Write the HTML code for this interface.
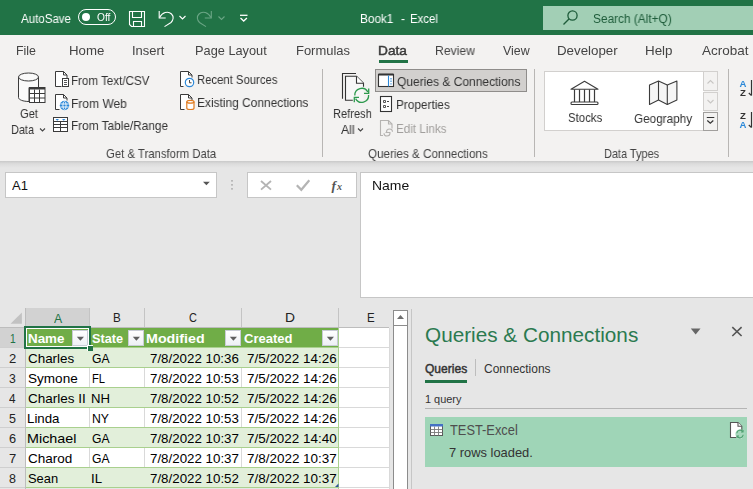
<!DOCTYPE html>
<html><head><meta charset="utf-8">
<style>
*{margin:0;padding:0;box-sizing:border-box}
html,body{width:753px;height:489px;overflow:hidden;background:#e6e6e6;font-family:"Liberation Sans",sans-serif;position:relative}
.a{position:absolute;white-space:nowrap}
svg.a{overflow:visible}
.g{will-change:transform}
</style></head><body>
<div class="a" style="left:0px;top:0px;width:753px;height:35px;background:#217346"></div>
<div class="a g" style="left:21.00px;top:11.54px;font-size:12px;line-height:14.4px;color:#fff;font-weight:normal;transform:scaleX(0.9612);transform-origin:0 0;">AutoSave</div>
<div class="a" style="left:78px;top:9px;width:38px;height:16px;border:1px solid #fff;border-radius:8px"></div>
<div class="a" style="left:82px;top:13px;width:8px;height:8px;background:#fff;border-radius:50%"></div>
<div class="a g" style="left:96.59px;top:12.04px;font-size:10px;line-height:12.0px;color:#fff;font-weight:normal;transform:scaleX(1.0175);transform-origin:0 0;">Off</div>
<svg class="a" style="left:0;top:0" width="260" height="35">
 <g fill="none" stroke="#fff" stroke-width="1.1">
  <path d="M129.5 11.5h15v15h-13l-2-2z"/>
  <path d="M132.5 11.5v6h9v-6"/>
  <path d="M133.5 26.5v-5h8v5"/>
  <path d="M159.2 11v7h6.5"/>
  <path d="M159.6 17.6C162 12.5 168 10.5 171.5 14C174 16.5 173.5 20 171 22.5L164.5 26.6"/>
  <path d="M179.5 16l3 3l3-3"/>
 </g>
 <g fill="none" stroke="#6aa585" stroke-width="1.1">
  <path d="M211.3 11v7h-6.5"/>
  <path d="M210.9 17.6C208.5 12.5 202.5 10.5 199 14C196.5 16.5 197 20 199.5 22.5L206 26.6"/>
  <path d="M218.5 16.5l3 3l3-3"/>
 </g>
 <g fill="none" stroke="#fff" stroke-width="1.3">
  <path d="M240 15.3h7.5"/>
  <path d="M240.5 18l3.2 3l3.2-3"/>
 </g>
</svg>
<div class="a g" style="left:360.36px;top:12.24px;font-size:12px;line-height:14.4px;color:#fff;font-weight:normal;transform:scaleX(0.9812);transform-origin:0 0;">Book1</div>
<div class="a g" style="left:400.52px;top:12.24px;font-size:12px;line-height:14.4px;color:#fff;font-weight:normal;">-</div>
<div class="a g" style="left:410.49px;top:12.24px;font-size:12px;line-height:14.4px;color:#fff;font-weight:normal;transform:scaleX(0.9480);transform-origin:0 0;">Excel</div>
<div class="a" style="left:543px;top:6px;width:210px;height:24px;background:#a2cfb5"></div>
<svg class="a" style="left:560px;top:8px" width="22" height="20"><g fill="none" stroke="#1e5c3a" stroke-width="1.3"><circle cx="12.5" cy="7.5" r="4.6"/><path d="M9.2 10.8L3.5 16.5"/></g></svg>
<div class="a g" style="left:592.53px;top:11.74px;font-size:12px;line-height:14.4px;color:#1e5c3a;font-weight:normal;transform:scaleX(0.9888);transform-origin:0 0;">Search (Alt+Q)</div>
<div class="a" style="left:0px;top:35px;width:753px;height:126px;background:#f3f2f1"></div>
<div class="a g" style="left:16.32px;top:44.06px;font-size:12.4px;line-height:14.88px;color:#444;font-weight:normal;transform:scaleX(0.9870);transform-origin:0 0;">File</div>
<div class="a g" style="left:68.54px;top:44.06px;font-size:12.4px;line-height:14.88px;color:#444;font-weight:normal;transform:scaleX(1.0684);transform-origin:0 0;">Home</div>
<div class="a g" style="left:132.03px;top:44.06px;font-size:12.4px;line-height:14.88px;color:#444;font-weight:normal;transform:scaleX(1.0460);transform-origin:0 0;">Insert</div>
<div class="a g" style="left:194.98px;top:44.06px;font-size:12.4px;line-height:14.88px;color:#444;font-weight:normal;transform:scaleX(1.0310);transform-origin:0 0;">Page Layout</div>
<div class="a g" style="left:296.16px;top:44.06px;font-size:12.4px;line-height:14.88px;color:#444;font-weight:normal;transform:scaleX(1.0455);transform-origin:0 0;">Formulas</div>
<div class="a g" style="left:434.52px;top:44.06px;font-size:12.4px;line-height:14.88px;color:#444;font-weight:normal;transform:scaleX(0.9833);transform-origin:0 0;">Review</div>
<div class="a g" style="left:503.30px;top:44.06px;font-size:12.4px;line-height:14.88px;color:#444;font-weight:normal;">View</div>
<div class="a g" style="left:556.93px;top:44.06px;font-size:12.4px;line-height:14.88px;color:#444;font-weight:normal;transform:scaleX(1.0746);transform-origin:0 0;">Developer</div>
<div class="a g" style="left:644.93px;top:44.06px;font-size:12.4px;line-height:14.88px;color:#444;font-weight:normal;transform:scaleX(1.0805);transform-origin:0 0;">Help</div>
<div class="a g" style="left:702.00px;top:44.06px;font-size:12.4px;line-height:14.88px;color:#444;font-weight:normal;transform:scaleX(1.0874);transform-origin:0 0;">Acrobat</div>
<div class="a g" style="left:377.90px;top:44.06px;font-size:12.4px;line-height:14.88px;color:#3a3a3a;font-weight:normal;transform:scaleX(1.1050);transform-origin:0 0;-webkit-text-stroke:0.45px #3a3a3a;">Data</div>
<div class="a" style="left:379px;top:60px;width:29px;height:3px;background:#217346"></div>
<svg class="a" style="left:0;top:60px" width="60" height="50"><g transform="translate(0,-60)">
 <path d="M18.5 77v20.5c0 2.2 4.5 4 10.5 4V87.5h9.5V77" fill="#fafafa" stroke="#3b3b3b" stroke-width="1"/>
 <ellipse cx="28.5" cy="77" rx="10" ry="4" fill="#fafafa" stroke="#3b3b3b" stroke-width="1"/>
 <rect x="29.5" y="87.5" width="15.5" height="15" fill="#fff" stroke="#3b3b3b" stroke-width="1"/>
 <rect x="29.5" y="87.5" width="15.5" height="2" fill="#3b3b3b"/>
 <path d="M29.5 93.5h15.5M29.5 98h15.5M34.5 89.5v13M39.5 89.5v13" stroke="#3b3b3b" stroke-width="1"/>
</g></svg>
<div class="a g" style="left:19.94px;top:106.18px;font-size:12.8px;line-height:15.36px;color:#333;font-weight:normal;transform:scaleX(0.8692);transform-origin:0 0;">Get</div>
<div class="a g" style="left:10.93px;top:122.08px;font-size:12.8px;line-height:15.36px;color:#333;font-weight:normal;transform:scaleX(0.8518);transform-origin:0 0;">Data</div>
<svg class="a" style="left:39px;top:127px" width="8" height="6"><path d="M1 1.5l2.5 2.5l2.5-2.5" fill="none" stroke="#444" stroke-width="1.1"/></svg>
<svg class="a" style="left:50px;top:66px" width="150" height="70"><g transform="translate(-50,-66)" stroke-width="1" shape-rendering="auto">
 <!-- From Text/CSV -->
 <path d="M61.5 86.5h-6v-15h8l3.5 3.5v3.5" fill="#fff" stroke="#3b3b3b"/>
 <path d="M63.5 71.5v3.5h3.5" fill="none" stroke="#3b3b3b"/>
 <rect x="62.5" y="78.5" width="6" height="8" fill="#fff" stroke="#3b3b3b"/>
 <path d="M64 80.5h3M64 82.5h3M64 84.5h3" stroke="#555" stroke-width="1"/>
 <!-- From Web -->
 <path d="M59.5 109.5h-4v-15h8l3.5 3.5v2.5" fill="#fff" stroke="#3b3b3b"/>
 <path d="M63.5 94.5v3.5h3.5" fill="none" stroke="#3b3b3b"/>
 <circle cx="64.5" cy="105.5" r="4.7" fill="#2b88d8"/>
 <path d="M60.3 104h8.4M60.3 107h8.4" stroke="#fff" stroke-width="0.9"/>
 <ellipse cx="64.5" cy="105.5" rx="1.6" ry="4.2" fill="none" stroke="#fff" stroke-width="0.9"/>
 <!-- From Table/Range -->
 <rect x="53.5" y="117.5" width="14" height="14" fill="#fff" stroke="#3b3b3b"/>
 <path d="M53.5 121.5h14M53.5 124.5h14M53.5 127.5h14M60.5 121.5v10" stroke="#3b3b3b" stroke-width="1"/>
 <path d="M55.5 119h3.5l-1.75 1.8zM62 119h3.5l-1.75 1.8z" fill="#2b88d8"/>
 <!-- Recent Sources -->
 <path d="M183.5 86.5h-3v-15h8l3.5 3.5v2.5" fill="#fff" stroke="#3b3b3b"/>
 <path d="M188.5 71.5v3.5h3.5" fill="none" stroke="#3b3b3b"/>
 <circle cx="189.5" cy="82.5" r="4.2" fill="#fff" stroke="#2b88d8" stroke-width="1.2"/>
 <path d="M189.5 80v2.8h2" fill="none" stroke="#333" stroke-width="0.9"/>
 <!-- Existing Connections -->
 <path d="M184.5 109.5h-4v-15h8l3.5 3.5v2.5" fill="#fff" stroke="#3b3b3b"/>
 <path d="M188.5 94.5v3.5h3.5" fill="none" stroke="#3b3b3b"/>
 <path d="M186.8 101.8v6.4c0 .9 1.6 1.3 3.6 1.3s3.6-.4 3.6-1.3v-6.4" fill="#fff" stroke="#e07b1f" stroke-width="1.2"/>
 <ellipse cx="190.4" cy="101.8" rx="3.6" ry="1.4" fill="#fff" stroke="#e07b1f" stroke-width="1.2"/>
</g></svg>
<div class="a g" style="left:71.37px;top:72.88px;font-size:12.8px;line-height:15.36px;color:#333;font-weight:normal;transform:scaleX(0.9058);transform-origin:0 0;">From Text/CSV</div>
<div class="a g" style="left:71.34px;top:95.68px;font-size:12.8px;line-height:15.36px;color:#333;font-weight:normal;transform:scaleX(0.9393);transform-origin:0 0;">From Web</div>
<div class="a g" style="left:71.35px;top:118.48px;font-size:12.8px;line-height:15.36px;color:#333;font-weight:normal;transform:scaleX(0.9238);transform-origin:0 0;">From Table/Range</div>
<div class="a g" style="left:196.80px;top:72.38px;font-size:12.8px;line-height:15.36px;color:#333;font-weight:normal;transform:scaleX(0.8833);transform-origin:0 0;">Recent Sources</div>
<div class="a g" style="left:196.74px;top:95.18px;font-size:12.8px;line-height:15.36px;color:#333;font-weight:normal;transform:scaleX(0.9329);transform-origin:0 0;">Existing Connections</div>
<div class="a g" style="left:105.83px;top:145.88px;font-size:12.8px;line-height:15.36px;color:#444;font-weight:normal;transform:scaleX(0.8854);transform-origin:0 0;">Get &amp; Transform Data</div>
<div class="a" style="left:322px;top:69px;width:1px;height:88px;background:#b8b6b4"></div>
<svg class="a" style="left:330px;top:66px" width="70" height="45"><g transform="translate(-330,-66)" stroke-width="1.1">
 <path d="M342.5 98.7V73.5h13.5" fill="none" stroke="#333"/>
 <path d="M345.5 100.2V76.3h11l7 7v17h-18z" fill="#f7f7f7" stroke="none"/>
 <path d="M352.8 100.2h-7.3V76.3h11l7 7v3.5" fill="none" stroke="#333"/>
 <path d="M356.5 76.3v7h7" fill="#fff" stroke="#333"/>
 <path d="M354.8 95.5A6.9 6.9 0 0 1 367.8 92M368.6 95A6.9 6.9 0 0 1 355.6 98.6" fill="none" stroke="#2e9a4e" stroke-width="1.3"/>
 <path d="M368.7 88.6V93.4H364M354.3 102.2V97.3H359" fill="none" stroke="#2e9a4e" stroke-width="1.3"/>
</g></svg>
<div class="a g" style="left:332.91px;top:106.48px;font-size:12.8px;line-height:15.36px;color:#333;font-weight:normal;transform:scaleX(0.8659);transform-origin:0 0;">Refresh</div>
<div class="a g" style="left:340.50px;top:121.68px;font-size:12.8px;line-height:15.36px;color:#333;font-weight:normal;transform:scaleX(0.9531);transform-origin:0 0;">All</div>
<svg class="a" style="left:357px;top:127px" width="8" height="6"><path d="M1 1.5l2.5 2.5l2.5-2.5" fill="none" stroke="#444" stroke-width="1.1"/></svg>
<div class="a" style="left:375px;top:69px;width:152px;height:23px;background:#d2d0ce;border:1px solid #8f8d8b"></div>
<svg class="a" style="left:375px;top:69px" width="25" height="70"><g transform="translate(-375,-69)" stroke-width="1.1">
 <rect x="378.5" y="74.5" width="15" height="12" fill="#fff" stroke="#333"/>
 <path d="M378.5 74.5h15" stroke="#333" stroke-width="2"/>
 <path d="M388.5 75.5v11" stroke="#2b88d8" stroke-width="1.1"/>
 <path d="M391 78v1.4M391 80.6v1.4M391 83.2v1.4" stroke="#2b88d8" stroke-width="1.1"/>
 <rect x="380.5" y="96.5" width="11" height="15" fill="#fff" stroke="#333"/>
 <path d="M383.5 100.5h2v2h-2zM383.5 105.5h2v2h-2z" fill="none" stroke="#444" stroke-width="0.9"/>
 <path d="M387 101.5h2M387 106.5h2" stroke="#444" stroke-width="1"/>
 <path d="M383 135.5h-2.5v-15h8l3.5 3.5v4.5" fill="none" stroke="#b5b3b1"/>
 <path d="M388.5 120.5v3.5h3.5" fill="none" stroke="#b5b3b1"/>
 <path d="M386.5 132c0-1.8 1.3-3 3-3s3 1.2 3 2.8M390 133c0 1.8-1.3 3-3 3s-3-1.2-3-2.8M385.5 132.5h5" fill="none" stroke="#b5b3b1"/>
</g></svg>
<div class="a g" style="left:396.72px;top:73.68px;font-size:12.8px;line-height:15.36px;color:#333;font-weight:normal;transform:scaleX(0.9378);transform-origin:0 0;">Queries &amp; Connections</div>
<div class="a g" style="left:396.26px;top:97.38px;font-size:12.8px;line-height:15.36px;color:#333;font-weight:normal;transform:scaleX(0.9222);transform-origin:0 0;">Properties</div>
<div class="a g" style="left:396.27px;top:121.18px;font-size:12.8px;line-height:15.36px;color:#a19f9d;font-weight:normal;transform:scaleX(0.9115);transform-origin:0 0;">Edit Links</div>
<div class="a g" style="left:368.43px;top:145.78px;font-size:12.8px;line-height:15.36px;color:#444;font-weight:normal;transform:scaleX(0.9103);transform-origin:0 0;">Queries &amp; Connections</div>
<div class="a" style="left:534px;top:69px;width:1px;height:88px;background:#b8b6b4"></div>
<div class="a" style="left:544px;top:71px;width:160px;height:60px;background:#fff;border:1px solid #d2d0ce;border-right:none"></div>
<div class="a" style="left:703px;top:71px;width:15px;height:20px;background:#f3f2f1;border:1px solid #d2d0ce"></div>
<div class="a" style="left:703px;top:92px;width:15px;height:19px;background:#f3f2f1;border:1px solid #d2d0ce"></div>
<div class="a" style="left:703px;top:111.5px;width:15px;height:19px;background:#f3f2f1;border:1px solid #a19f9d"></div>
<svg class="a" style="left:540px;top:66px" width="190" height="70"><g transform="translate(-540,-66)" stroke-width="1.1">
 <path d="M571 89.3l13.5-8l13.5 8z" fill="#fff" stroke="#3b3b3b" stroke-linejoin="round"/>
 <path d="M574.5 89.5v12.5M579.5 89.5v12.5M584.5 89.5v12.5M589.5 89.5v12.5M594.5 89.5v12.5" stroke="#3b3b3b" stroke-width="1.2"/>
 <rect x="571" y="102" width="27" height="2.5" fill="#fff" stroke="#3b3b3b" rx="1"/>
 <path d="M649.5 85l9-4l8.8 4l9.6-4v19l-9.6 4.4l-8.8-4.4l-9 4.4z" fill="#f6f6f6" stroke="#3b3b3b" stroke-linejoin="round"/>
 <path d="M658.5 81v19M667.3 85v19.4" stroke="#3b3b3b"/>
 <path d="M707.5 83.5l3-3l3 3" fill="none" stroke="#c8c6c4"/>
 <path d="M707.5 100l3 3l3-3" fill="none" stroke="#c8c6c4"/>
 <path d="M706.8 117.5h7.5M707.3 120.5l3 2.8l3-2.8" fill="none" stroke="#333" stroke-width="1.2"/>
</g></svg>
<div class="a g" style="left:567.84px;top:110.48px;font-size:12.8px;line-height:15.36px;color:#333;font-weight:normal;transform:scaleX(0.8929);transform-origin:0 0;">Stocks</div>
<div class="a g" style="left:633.91px;top:110.68px;font-size:12.8px;line-height:15.36px;color:#333;font-weight:normal;transform:scaleX(0.9172);transform-origin:0 0;">Geography</div>
<div class="a g" style="left:603.73px;top:145.58px;font-size:12.8px;line-height:15.36px;color:#444;font-weight:normal;transform:scaleX(0.8542);transform-origin:0 0;">Data Types</div>
<div class="a" style="left:728px;top:69px;width:1px;height:88px;background:#b8b6b4"></div>
<svg class="a" style="left:735px;top:75px" width="20" height="60"><g transform="translate(-735,-75)">
 <text x="739.6" y="86.8" font-family="Liberation Sans" font-size="9.6" font-weight="bold" fill="#2b88d8">A</text>
 <text x="740" y="95.7" font-family="Liberation Sans" font-size="9.6" font-weight="bold" fill="#333">Z</text>
 <path d="M751.5 80v15.5M748.8 93l2.7 2.7" fill="none" stroke="#333" stroke-width="1.2"/>
 <text x="740" y="118.7" font-family="Liberation Sans" font-size="9.6" font-weight="bold" fill="#333">Z</text>
 <text x="739.6" y="128" font-family="Liberation Sans" font-size="9.6" font-weight="bold" fill="#2b88d8">A</text>
 <path d="M751.5 112v15.5M748.8 125l2.7 2.7" fill="none" stroke="#333" stroke-width="1.2"/>
</g></svg>
<div class="a" style="left:0px;top:161px;width:753px;height:7px;background:linear-gradient(#c9c9c9,#dcdcdc 40%,#e6e6e6)"></div>
<div class="a" style="left:5px;top:172px;width:212px;height:26px;background:#fff;border:1px solid #c6c6c6"></div>
<div class="a" style="left:12.30px;top:178.87px;font-size:12.5px;line-height:15.0px;color:#111;font-weight:normal;transform:scaleX(1.0399);transform-origin:0 0;">A1</div>
<svg class="a" style="left:200px;top:178px" width="160" height="16"><g transform="translate(-200,-178)"><path d="M203 181.7h6.8l-3.4 3.6z" fill="#555"/><circle cx="232" cy="180.8" r="0.9" fill="#a6a6a6"/><circle cx="232" cy="184.8" r="0.9" fill="#a6a6a6"/><circle cx="232" cy="188.8" r="0.9" fill="#a6a6a6"/></g></svg>
<div class="a" style="left:247px;top:172px;width:110px;height:26px;background:#fff;border:1px solid #c6c6c6"></div>
<svg class="a" style="left:250px;top:175px" width="105" height="20"><g transform="translate(-250,-175)"><path d="M261 181l10 8.6M271 181l-10 8.6" stroke="#b4b4b4" stroke-width="1.9" fill="none"/><path d="M296.8 185.2l4.5 4.6l8-9.6" stroke="#b4b4b4" stroke-width="2.2" fill="none"/><text x="331.5" y="189.5" font-family="Liberation Serif" font-style="italic" font-weight="bold" font-size="13.5" fill="#555">f</text><text x="337" y="189.8" font-family="Liberation Serif" font-style="italic" font-weight="bold" font-size="10" fill="#555">x</text></g></svg>
<div class="a" style="left:360px;top:172px;width:393px;height:126px;background:#fff;border:1px solid #c6c6c6;border-right:none"></div>
<div class="a" style="left:371.68px;top:178.20px;font-size:13px;line-height:15.6px;color:#111;font-weight:normal;transform:scaleX(1.0733);transform-origin:0 0;">Name</div>
<div class="a" style="left:26px;top:308px;width:63px;height:19px;background:#d2d2d2"></div>
<div class="a" style="left:54.00px;top:310.68px;font-size:12.8px;line-height:15.36px;color:#217346;font-weight:normal;transform:scaleX(0.9562);transform-origin:0 0;">A</div>
<div class="a" style="left:113.37px;top:310.48px;font-size:12.8px;line-height:15.36px;color:#222;font-weight:normal;transform:scaleX(0.9115);transform-origin:0 0;">B</div>
<div class="a" style="left:189.45px;top:310.48px;font-size:12.8px;line-height:15.36px;color:#222;font-weight:normal;transform:scaleX(0.8545);transform-origin:0 0;">C</div>
<div class="a" style="left:284.89px;top:310.48px;font-size:12.8px;line-height:15.36px;color:#222;font-weight:normal;transform:scaleX(1.0807);transform-origin:0 0;">D</div>
<div class="a" style="left:366.58px;top:310.48px;font-size:12.8px;line-height:15.36px;color:#222;font-weight:normal;transform:scaleX(0.8949);transform-origin:0 0;">E</div>
<div class="a" style="left:0px;top:328px;width:25px;height:19px;background:#d2d2d2"></div>
<div class="a" style="left:26px;top:328px;width:313px;height:19px;background:#70ad47"></div>
<div class="a" style="left:339px;top:328px;width:50px;height:161px;background:#fff"></div>
<div class="a" style="left:26px;top:347px;width:313px;height:21px;background:#e2efda"></div>
<div class="a" style="left:26px;top:367px;width:313px;height:21px;background:#fff"></div>
<div class="a" style="left:26px;top:387px;width:313px;height:21px;background:#e2efda"></div>
<div class="a" style="left:26px;top:407px;width:313px;height:21px;background:#fff"></div>
<div class="a" style="left:26px;top:427px;width:313px;height:21px;background:#e2efda"></div>
<div class="a" style="left:26px;top:447px;width:313px;height:21px;background:#fff"></div>
<div class="a" style="left:26px;top:467px;width:313px;height:21px;background:#e2efda"></div>
<svg class="a" style="left:0;top:300px" width="400" height="189"><g transform="translate(0,-300)"><path d="M10.5 323.8h11.4v-11.3z" fill="#c2c2c2"/><path d="M89.5 308v19M144.5 308v19M241.5 308v19M338.5 308v19" stroke="#c4c4c4" stroke-width="1"/><path d="M0 347.5h25" stroke="#cfcfcf" stroke-width="1"/><path d="M26 347.5h313" stroke="#a9d08e" stroke-width="1"/><path d="M339 347.5h50" stroke="#d9d9d9" stroke-width="1"/><path d="M0 367.5h25" stroke="#cfcfcf" stroke-width="1"/><path d="M26 367.5h313" stroke="#a9d08e" stroke-width="1"/><path d="M339 367.5h50" stroke="#d9d9d9" stroke-width="1"/><path d="M0 387.5h25" stroke="#cfcfcf" stroke-width="1"/><path d="M26 387.5h313" stroke="#a9d08e" stroke-width="1"/><path d="M339 387.5h50" stroke="#d9d9d9" stroke-width="1"/><path d="M0 407.5h25" stroke="#cfcfcf" stroke-width="1"/><path d="M26 407.5h313" stroke="#a9d08e" stroke-width="1"/><path d="M339 407.5h50" stroke="#d9d9d9" stroke-width="1"/><path d="M0 427.5h25" stroke="#cfcfcf" stroke-width="1"/><path d="M26 427.5h313" stroke="#a9d08e" stroke-width="1"/><path d="M339 427.5h50" stroke="#d9d9d9" stroke-width="1"/><path d="M0 447.5h25" stroke="#cfcfcf" stroke-width="1"/><path d="M26 447.5h313" stroke="#a9d08e" stroke-width="1"/><path d="M339 447.5h50" stroke="#d9d9d9" stroke-width="1"/><path d="M0 467.5h25" stroke="#cfcfcf" stroke-width="1"/><path d="M26 467.5h313" stroke="#a9d08e" stroke-width="1"/><path d="M339 467.5h50" stroke="#d9d9d9" stroke-width="1"/><path d="M0 487.5h25" stroke="#cfcfcf" stroke-width="1"/><path d="M26 487.5h313" stroke="#a9d08e" stroke-width="1"/><path d="M339 487.5h50" stroke="#d9d9d9" stroke-width="1"/><path d="M89.5 368v19" stroke="#d9d9d9" stroke-width="1"/><path d="M144.5 368v19" stroke="#d9d9d9" stroke-width="1"/><path d="M241.5 368v19" stroke="#d9d9d9" stroke-width="1"/><path d="M89.5 408v19" stroke="#d9d9d9" stroke-width="1"/><path d="M144.5 408v19" stroke="#d9d9d9" stroke-width="1"/><path d="M241.5 408v19" stroke="#d9d9d9" stroke-width="1"/><path d="M89.5 448v19" stroke="#d9d9d9" stroke-width="1"/><path d="M144.5 448v19" stroke="#d9d9d9" stroke-width="1"/><path d="M241.5 448v19" stroke="#d9d9d9" stroke-width="1"/><path d="M389.5 328v161" stroke="#d9d9d9" stroke-width="1"/><path d="M338.5 328v161" stroke="#a9d08e" stroke-width="1"/><path d="M0 327.5h389" stroke="#bdbdbd" stroke-width="1"/><path d="M25.5 308v181" stroke="#bdbdbd" stroke-width="1"/></g></svg>
<div class="a" style="left:10.28px;top:331.96px;font-size:12.4px;line-height:14.88px;color:#217346;font-weight:normal;transform:scaleX(0.8248);transform-origin:0 0;">1</div>
<div class="a" style="left:8.85px;top:351.96px;font-size:12.4px;line-height:14.88px;color:#222;font-weight:normal;transform:scaleX(1.0519);transform-origin:0 0;">2</div>
<div class="a" style="left:9.13px;top:371.96px;font-size:12.4px;line-height:14.88px;color:#222;font-weight:normal;transform:scaleX(0.9875);transform-origin:0 0;">3</div>
<div class="a" style="left:9.26px;top:391.96px;font-size:12.4px;line-height:14.88px;color:#222;font-weight:normal;transform:scaleX(0.9488);transform-origin:0 0;">4</div>
<div class="a" style="left:9.00px;top:411.96px;font-size:12.4px;line-height:14.88px;color:#222;font-weight:normal;transform:scaleX(1.0081);transform-origin:0 0;">5</div>
<div class="a" style="left:8.86px;top:431.96px;font-size:12.4px;line-height:14.88px;color:#222;font-weight:normal;transform:scaleX(1.0295);transform-origin:0 0;">6</div>
<div class="a" style="left:8.85px;top:451.96px;font-size:12.4px;line-height:14.88px;color:#222;font-weight:normal;transform:scaleX(1.0519);transform-origin:0 0;">7</div>
<div class="a" style="left:9.00px;top:471.96px;font-size:12.4px;line-height:14.88px;color:#222;font-weight:normal;transform:scaleX(1.0081);transform-origin:0 0;">8</div>
<div class="a" style="left:72px;top:329.5px;width:16px;height:16px;background:linear-gradient(#fff,#eef0f5);border:1px solid #c9ccd6"></div>
<svg class="a" style="left:72px;top:329.5px" width="16" height="16"><path d="M4.8 6.8h7.2l-3.6 3.9z" fill="#5f5f5f"/></svg>
<div class="a" style="left:128px;top:329.5px;width:16px;height:16px;background:linear-gradient(#fff,#eef0f5);border:1px solid #c9ccd6"></div>
<svg class="a" style="left:128px;top:329.5px" width="16" height="16"><path d="M4.8 6.8h7.2l-3.6 3.9z" fill="#5f5f5f"/></svg>
<div class="a" style="left:225px;top:329.5px;width:16px;height:16px;background:linear-gradient(#fff,#eef0f5);border:1px solid #c9ccd6"></div>
<svg class="a" style="left:225px;top:329.5px" width="16" height="16"><path d="M4.8 6.8h7.2l-3.6 3.9z" fill="#5f5f5f"/></svg>
<div class="a" style="left:322px;top:329.5px;width:16px;height:16px;background:linear-gradient(#fff,#eef0f5);border:1px solid #c9ccd6"></div>
<svg class="a" style="left:322px;top:329.5px" width="16" height="16"><path d="M4.8 6.8h7.2l-3.6 3.9z" fill="#5f5f5f"/></svg>
<div class="a" style="left:27.90px;top:330.90px;font-size:13px;line-height:15.6px;color:#fff;font-weight:bold;transform:scaleX(1.0295);transform-origin:0 0;">Name</div>
<div class="a" style="left:92.15px;top:331.10px;font-size:13px;line-height:15.6px;color:#fff;font-weight:bold;transform:scaleX(0.9779);transform-origin:0 0;">State</div>
<div class="a" style="left:146.44px;top:331.10px;font-size:13px;line-height:15.6px;color:#fff;font-weight:bold;transform:scaleX(1.0971);transform-origin:0 0;">Modified</div>
<div class="a" style="left:244.08px;top:331.10px;font-size:13px;line-height:15.6px;color:#fff;font-weight:bold;transform:scaleX(1.0022);transform-origin:0 0;">Created</div>
<div class="a" style="left:24px;top:326px;width:67px;height:23px;border:2px solid #217346"></div>
<div class="a" style="left:26px;top:328px;width:63px;height:19px;border:1px solid #fff"></div>
<div class="a" style="left:87px;top:345px;width:5.5px;height:5.5px;background:#217346;border:1px solid #fff;border-right:none;border-bottom:none"></div>
<div class="a" style="left:27.63px;top:351.67px;font-size:12.6px;line-height:15.12px;color:#000;font-weight:normal;transform:scaleX(1.0658);transform-origin:0 0;">Charles</div>
<div class="a" style="left:91.89px;top:351.67px;font-size:12.6px;line-height:15.12px;color:#000;font-weight:normal;transform:scaleX(0.9652);transform-origin:0 0;">GA</div>
<div class="a" style="left:150.23px;top:351.67px;font-size:12.6px;line-height:15.12px;color:#000;font-weight:normal;transform:scaleX(1.0567);transform-origin:0 0;">7/8/2022 10:36</div>
<div class="a" style="left:246.83px;top:351.67px;font-size:12.6px;line-height:15.12px;color:#000;font-weight:normal;transform:scaleX(1.0664);transform-origin:0 0;">7/5/2022 14:26</div>
<div class="a" style="left:27.76px;top:371.67px;font-size:12.6px;line-height:15.12px;color:#000;font-weight:normal;transform:scaleX(1.0759);transform-origin:0 0;">Symone</div>
<div class="a" style="left:91.60px;top:371.67px;font-size:12.6px;line-height:15.12px;color:#000;font-weight:normal;transform:scaleX(0.8903);transform-origin:0 0;">FL</div>
<div class="a" style="left:150.23px;top:371.67px;font-size:12.6px;line-height:15.12px;color:#000;font-weight:normal;transform:scaleX(1.0567);transform-origin:0 0;">7/8/2022 10:53</div>
<div class="a" style="left:246.83px;top:371.67px;font-size:12.6px;line-height:15.12px;color:#000;font-weight:normal;transform:scaleX(1.0664);transform-origin:0 0;">7/5/2022 14:26</div>
<div class="a" style="left:27.63px;top:391.67px;font-size:12.6px;line-height:15.12px;color:#000;font-weight:normal;transform:scaleX(1.0712);transform-origin:0 0;">Charles II</div>
<div class="a" style="left:91.45px;top:391.67px;font-size:12.6px;line-height:15.12px;color:#000;font-weight:normal;transform:scaleX(1.0441);transform-origin:0 0;">NH</div>
<div class="a" style="left:150.23px;top:391.67px;font-size:12.6px;line-height:15.12px;color:#000;font-weight:normal;transform:scaleX(1.0583);transform-origin:0 0;">7/8/2022 10:52</div>
<div class="a" style="left:246.83px;top:391.67px;font-size:12.6px;line-height:15.12px;color:#000;font-weight:normal;transform:scaleX(1.0664);transform-origin:0 0;">7/5/2022 14:26</div>
<div class="a" style="left:27.24px;top:411.67px;font-size:12.6px;line-height:15.12px;color:#000;font-weight:normal;transform:scaleX(1.0546);transform-origin:0 0;">Linda</div>
<div class="a" style="left:91.52px;top:411.67px;font-size:12.6px;line-height:15.12px;color:#000;font-weight:normal;transform:scaleX(0.9704);transform-origin:0 0;">NY</div>
<div class="a" style="left:150.23px;top:411.67px;font-size:12.6px;line-height:15.12px;color:#000;font-weight:normal;transform:scaleX(1.0567);transform-origin:0 0;">7/8/2022 10:53</div>
<div class="a" style="left:246.83px;top:411.67px;font-size:12.6px;line-height:15.12px;color:#000;font-weight:normal;transform:scaleX(1.0664);transform-origin:0 0;">7/5/2022 14:26</div>
<div class="a" style="left:27.15px;top:431.67px;font-size:12.6px;line-height:15.12px;color:#000;font-weight:normal;transform:scaleX(1.1387);transform-origin:0 0;">Michael</div>
<div class="a" style="left:91.89px;top:431.67px;font-size:12.6px;line-height:15.12px;color:#000;font-weight:normal;transform:scaleX(0.9652);transform-origin:0 0;">GA</div>
<div class="a" style="left:150.23px;top:431.67px;font-size:12.6px;line-height:15.12px;color:#000;font-weight:normal;transform:scaleX(1.0583);transform-origin:0 0;">7/8/2022 10:37</div>
<div class="a" style="left:246.83px;top:431.67px;font-size:12.6px;line-height:15.12px;color:#000;font-weight:normal;transform:scaleX(1.0664);transform-origin:0 0;">7/5/2022 14:40</div>
<div class="a" style="left:27.62px;top:451.67px;font-size:12.6px;line-height:15.12px;color:#000;font-weight:normal;transform:scaleX(1.0728);transform-origin:0 0;">Charod</div>
<div class="a" style="left:91.89px;top:451.67px;font-size:12.6px;line-height:15.12px;color:#000;font-weight:normal;transform:scaleX(0.9652);transform-origin:0 0;">GA</div>
<div class="a" style="left:150.23px;top:451.67px;font-size:12.6px;line-height:15.12px;color:#000;font-weight:normal;transform:scaleX(1.0583);transform-origin:0 0;">7/8/2022 10:37</div>
<div class="a" style="left:246.83px;top:451.67px;font-size:12.6px;line-height:15.12px;color:#000;font-weight:normal;transform:scaleX(1.0680);transform-origin:0 0;">7/8/2022 10:37</div>
<div class="a" style="left:27.78px;top:471.67px;font-size:12.6px;line-height:15.12px;color:#000;font-weight:normal;transform:scaleX(1.0243);transform-origin:0 0;">Sean</div>
<div class="a" style="left:91.31px;top:471.67px;font-size:12.6px;line-height:15.12px;color:#000;font-weight:normal;transform:scaleX(1.0503);transform-origin:0 0;">IL</div>
<div class="a" style="left:150.23px;top:471.67px;font-size:12.6px;line-height:15.12px;color:#000;font-weight:normal;transform:scaleX(1.0583);transform-origin:0 0;">7/8/2022 10:52</div>
<div class="a" style="left:246.83px;top:471.67px;font-size:12.6px;line-height:15.12px;color:#000;font-weight:normal;transform:scaleX(1.0680);transform-origin:0 0;">7/8/2022 10:37</div>
<svg class="a" style="left:334px;top:483px" width="5" height="5"><path d="M1 4h3.5v-3.5z" fill="#2f5597"/></svg>
<div class="a" style="left:393px;top:310px;width:15px;height:179px;background:#fff;border:1.5px solid #8c8c8c;border-bottom:none"></div>
<div class="a" style="left:393px;top:324.5px;width:15px;height:1.5px;background:#8c8c8c"></div>
<svg class="a" style="left:393px;top:310px" width="15" height="15"><path d="M4 9h7l-3.5-4z" fill="#6e6e6e"/></svg>
<div class="a" style="left:411px;top:309px;width:1px;height:180px;background:#c6c6c6"></div>
<div class="a" style="left:424.67px;top:323.39px;font-size:20.4px;line-height:24.48px;color:#2b7a50;font-weight:normal;transform:scaleX(1.0170);transform-origin:0 0;">Queries &amp; Connections</div>
<svg class="a" style="left:685px;top:320px" width="65" height="25"><g transform="translate(-685,-320)"><path d="M690.8 328.5h9.7l-4.85 5.9z" fill="#666"/><path d="M732.3 327.2l9.3 8.8M741.6 327.2l-9.3 8.8" stroke="#555" stroke-width="1.6"/></g></svg>
<div class="a" style="left:424.52px;top:361.65px;font-size:12.2px;line-height:14.64px;color:#333;font-weight:normal;transform:scaleX(0.9889);transform-origin:0 0;-webkit-text-stroke:0.45px #333;">Queries</div>
<div class="a" style="left:425px;top:380px;width:42px;height:3px;background:#217346"></div>
<div class="a" style="left:475px;top:359px;width:1px;height:17px;background:#bdbdbd"></div>
<div class="a" style="left:483.70px;top:361.65px;font-size:12.2px;line-height:14.64px;color:#333;font-weight:normal;transform:scaleX(0.9829);transform-origin:0 0;">Connections</div>
<div class="a" style="left:424.73px;top:393.38px;font-size:10.8px;line-height:12.96px;color:#333;font-weight:normal;transform:scaleX(1.0123);transform-origin:0 0;">1 query</div>
<div class="a" style="left:425px;top:408px;width:322px;height:1.2px;background:#b5b5b5"></div>
<div class="a" style="left:425px;top:417px;width:322px;height:50px;background:#9fd5b7"></div>
<svg class="a" style="left:428px;top:420px" width="20" height="20"><g transform="translate(-428,-420)"><rect x="430.5" y="424.5" width="12" height="11" fill="#fff" stroke="#5a5a5a" stroke-width="1"/><rect x="430" y="424" width="13" height="2.5" fill="#4472c4"/><path d="M430.5 429.5h12M430.5 432.5h12M434.5 426.5v9M438.5 426.5v9" stroke="#7a7a7a" stroke-width="0.9"/></g></svg>
<div class="a" style="left:449.64px;top:421.33px;font-size:15.5px;line-height:18.6px;color:#4e4e4e;font-weight:normal;transform:scaleX(0.8281);transform-origin:0 0;">TEST-Excel</div>
<div class="a" style="left:449.26px;top:445.30px;font-size:13px;line-height:15.6px;color:#333;font-weight:normal;transform:scaleX(0.9920);transform-origin:0 0;">7 rows loaded.</div>
<svg class="a" style="left:726px;top:419px" width="22" height="22"><g transform="translate(-726,-419)"><path d="M730.5 437.5v-15h7.5l3.8 3.8v12.2z" fill="#fff" stroke="none"/><path d="M736.3 437.5h-5.8v-15h7.5l3.8 3.8v4" fill="none" stroke="#555" stroke-width="1.1"/><path d="M738 422.5v3.8h3.8" fill="#fff" stroke="#555" stroke-width="1.1"/><circle cx="740" cy="434" r="4.6" fill="#a8d8bd"/><path d="M736.8 433.2a3.3 3.3 0 0 1 6-1.6M743.2 434.8a3.3 3.3 0 0 1-6 1.6" fill="none" stroke="#4c9e6e" stroke-width="1.1"/><path d="M743 430v2h-2M737 438v-2h2" fill="none" stroke="#4c9e6e" stroke-width="1.1"/></g></svg>
</body></html>
